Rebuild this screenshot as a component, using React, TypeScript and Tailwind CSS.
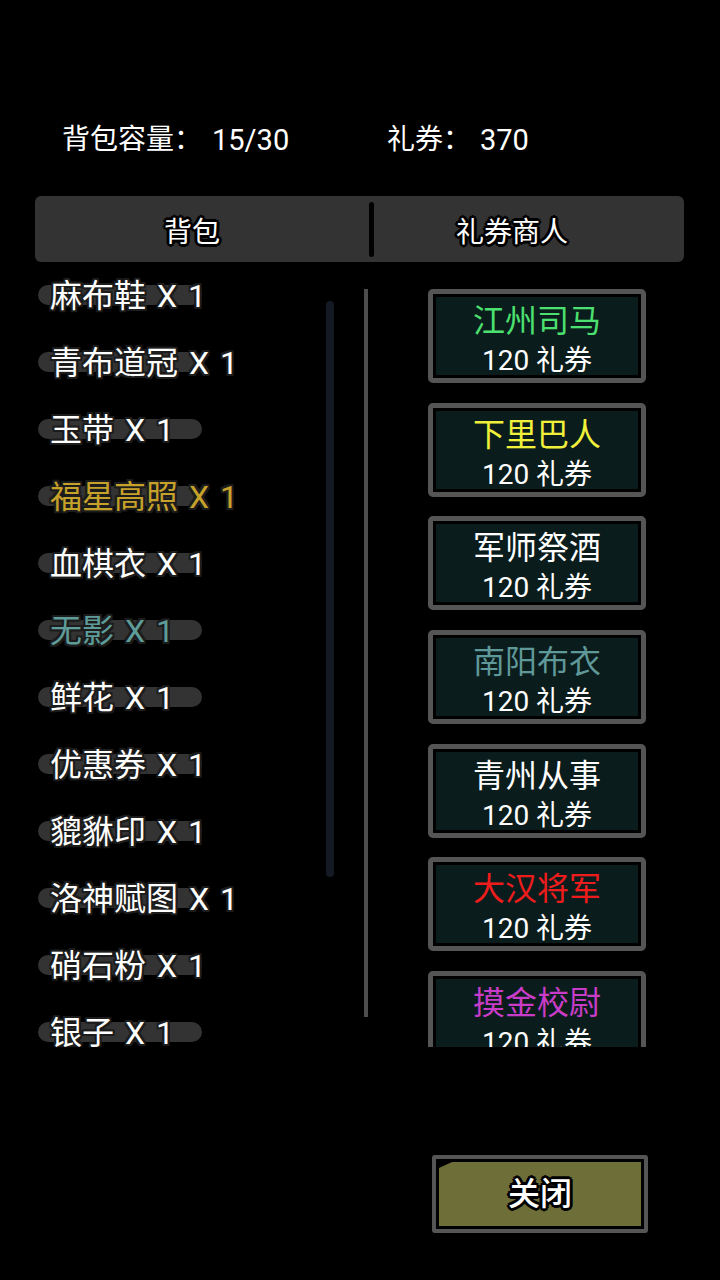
import React from "react";

const FONT = { fontFamily: 'Roboto, "Noto Sans CJK SC", "Noto Sans", sans-serif' };

const items: { name: string; color: string }[] = [
  { name: "麻布鞋", color: "text-white" },
  { name: "青布道冠", color: "text-white" },
  { name: "玉带", color: "text-white" },
  { name: "福星高照", color: "text-[#c6a22a]" },
  { name: "血棋衣", color: "text-white" },
  { name: "无影", color: "text-[#5e9c9a]" },
  { name: "鲜花", color: "text-white" },
  { name: "优惠券", color: "text-white" },
  { name: "貔貅印", color: "text-white" },
  { name: "洛神赋图", color: "text-white" },
  { name: "硝石粉", color: "text-white" },
  { name: "银子", color: "text-white" },
];

const shop: { name: string; color: string }[] = [
  { name: "江州司马", color: "text-[#4be070]" },
  { name: "下里巴人", color: "text-[#f0f03a]" },
  { name: "军师祭酒", color: "text-white" },
  { name: "南阳布衣", color: "text-[#5f9898]" },
  { name: "青州从事", color: "text-white" },
  { name: "大汉将军", color: "text-[#ee1c1c]" },
  { name: "摸金校尉", color: "text-[#c83cc8]" },
];

const outlineDark =
  "[text-shadow:-2px_-2px_0_#1c1c1c,2px_-2px_0_#1c1c1c,-2px_2px_0_#1c1c1c,2px_2px_0_#1c1c1c,0_2px_0_#1c1c1c,0_-2px_0_#1c1c1c,2px_0_0_#1c1c1c,-2px_0_0_#1c1c1c]";
const outlineBlack =
  "[text-shadow:-2px_-2px_0_#000,2px_-2px_0_#000,-2px_2px_0_#000,2px_2px_0_#000,0_3px_0_#000,0_-3px_0_#000,3px_0_0_#000,-3px_0_0_#000]";

export default function App() {
  return (
    <div className="w-[720px] h-[1280px] bg-black overflow-hidden flex flex-col" style={FONT}>
      {/* header */}
      <div className="h-[196px] shrink-0 pt-[120px]">
        <div className="flex h-[40px] leading-[40px] text-[28px] text-white">
          <div className="ml-[62px] w-[325px] flex">
            <span>背包容量：</span>
            <span className="ml-[10px] text-[29px]">15/30</span>
          </div>
          <div className="flex">
            <span>礼券：</span>
            <span className="ml-[9px] text-[29px]">370</span>
          </div>
        </div>
      </div>

      {/* tabs */}
      <div className="ml-[35px] w-[649px] h-[66px] shrink-0 bg-[#333333] rounded-[6px] flex items-center">
        <div className={`w-[334px] h-full flex items-center justify-center pt-[8px] pr-[20px] text-[28px] text-white ${outlineBlack}`}>
          背包
        </div>
        <div className="w-[5px] h-[55px] bg-black rounded-full" />
        <div className={`flex-1 h-full flex items-center justify-center pt-[8px] pr-[34px] text-[28px] text-white ${outlineBlack}`}>
          礼券商人
        </div>
      </div>

      {/* content */}
      <div className="h-[785px] shrink-0 overflow-hidden flex">
        <div className="w-[326px] shrink-0 flex flex-col">
          {items.map((it) => (
            <div key={it.name} className="relative h-[67px] shrink-0 flex items-center">
              <div className="absolute left-[38px] top-[23px] w-[164px] h-[20px] rounded-full bg-[#333333]" />
              <span
                className={`relative ml-[50px] text-[32px] leading-[40px] whitespace-nowrap [word-spacing:3px] ${it.color} ${outlineDark}`}
              >
                {it.name} X 1
              </span>
            </div>
          ))}
        </div>
        <div className="w-[8px] shrink-0 mt-[39px] h-[576px] rounded-full bg-[#141a24]" />
        <div className="w-[30px] shrink-0" />
        <div className="w-[4px] shrink-0 mt-[27px] h-[728px] bg-[#4d4d4d]" />
        <div className="pl-[60px] pt-[27px] flex flex-col gap-[19.67px]">
          {shop.map((s) => (
            <div
              key={s.name}
              className="w-[218px] h-[94px] shrink-0 border-[5px] border-[#555555] rounded-[5px] bg-black p-[3px]"
            >
              <div className="h-full bg-[#0b1c1c] flex flex-col items-center">
                <div className={`mt-[4px] h-[40px] shrink-0 leading-[40px] text-[32px] ${s.color}`}>{s.name}</div>
                <div className="h-[40px] shrink-0 leading-[40px] text-[28px] text-white">120 礼券</div>
              </div>
            </div>
          ))}
        </div>
      </div>

      {/* close button */}
      <div className="mt-[108px] ml-[432px] w-[216px] h-[78px] border-[4px] border-[#555555] rounded-[3px] bg-black p-[3px]">
        <div className="h-full bg-[#6e6e38] [clip-path:polygon(13px_0,100%_0,100%_100%,0_100%,0_6px)] flex items-center justify-center">
          <span className={`text-[32px] font-medium text-white leading-[40px] ${outlineBlack}`}>关闭</span>
        </div>
      </div>
    </div>
  );
}
